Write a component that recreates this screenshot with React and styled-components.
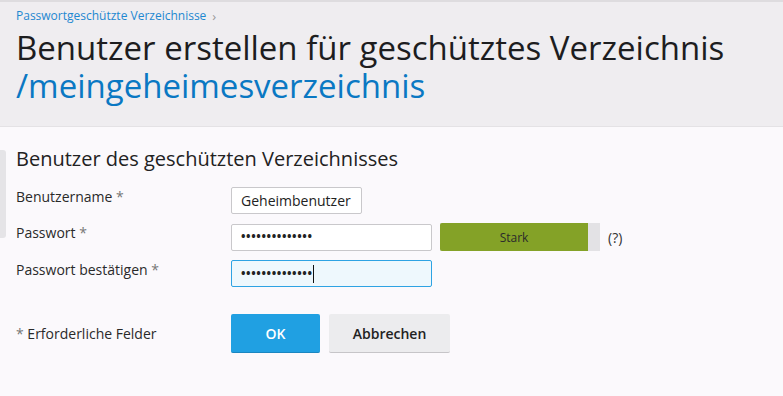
import React from 'react';
import styled, { createGlobalStyle } from 'styled-components';

const GlobalStyle = createGlobalStyle`
  html, body {
    margin: 0;
    padding: 0;
    background: #fbf9fc;
    font-family: 'Open Sans', 'DejaVu Sans', sans-serif;
    color: #222;
  }
`;

const Page = styled.div`
  width: 783px;
  height: 396px;
  overflow: hidden;
  background: #fbf9fc;
`;

const Header = styled.header`
  background: #efedf0;
  border-top: 2px solid #dedcdf;
  border-bottom: 1px solid #e4e2e5;
  height: 127px;
  box-sizing: border-box;
  padding: 6px 16px 0;
`;

const Breadcrumb = styled.div`
  display: flex;
  align-items: center;
  gap: 6px;
  font-size: 12px;
  line-height: 16px;
  color: #1e88d0;

  span.sep {
    color: #999;
    font-size: 13px;
  }
`;

const Title = styled.h1`
  margin: 5px 0 0;
  font-size: 33px;
  font-weight: 400;
  line-height: 38px;
  color: #1d1d1f;
`;

const Path = styled.span`
  display: block;
  color: #0a78c3;
`;

const Body = styled.main`
  display: flex;
  padding-top: 19px;
`;

const SideTab = styled.div`
  width: 6px;
  height: 88px;
  margin-top: 4px;
  background: #e5e4e7;
  border-radius: 0 3px 3px 0;
  flex: none;
`;

const Content = styled.div`
  padding-left: 10px;
  flex: 1;
`;

const SectionTitle = styled.h2`
  margin: 0 0 15px;
  font-size: 20px;
  font-weight: 400;
  line-height: 26px;
  color: #222;
`;

const Form = styled.div`
  display: grid;
  grid-template-columns: 215px auto;
  row-gap: 9px;
  align-items: start;
`;

const Label = styled.label`
  font-size: 14px;
  line-height: 20px;
  color: #2a2a2a;

  span {
    color: #777;
  }
`;

const Field = styled.div`
  display: flex;
  align-items: center;
  gap: 8px;
`;

const Input = styled.div`
  box-sizing: border-box;
  width: ${({ $w }) => $w}px;
  height: 27px;
  border: 1px solid ${({ $focus }) => ($focus ? '#2ea3e3' : '#c9c8cb')};
  border-radius: 2px;
  background: ${({ $focus }) => ($focus ? '#eef8fd' : '#fff')};
  padding: 0 9px;
  display: flex;
  align-items: center;
  font-size: 14px;
  color: #222;
`;

const Dots = styled.span`
  letter-spacing: 0.6px;
  font-size: 12px;
  font-weight: 700;
  line-height: 1;
`;

const Caret = styled.span`
  display: inline-block;
  width: 1px;
  height: 18px;
  background: #111;
  margin-left: 0;
`;

const Strength = styled.div`
  display: flex;
  width: 160px;
  height: 28px;
  background: #e3e2e5;
`;

const StrengthFill = styled.div`
  width: 148px;
  background: #84a227;
  border-radius: 2px 0 0 2px;
  display: flex;
  align-items: center;
  justify-content: center;
  font-size: 12px;
  color: #2b2b2b;
`;

const Help = styled.span`
  font-size: 14px;
  color: #333;
`;

const Footer = styled.div`
  display: grid;
  grid-template-columns: 215px auto;
  align-items: center;
  margin-top: 27px;
`;

const Note = styled.div`
  font-size: 14px;
  color: #2a2a2a;

  span {
    color: #777;
  }
`;

const Buttons = styled.div`
  display: flex;
  gap: 9px;
`;

const Button = styled.button`
  box-sizing: border-box;
  height: 39px;
  width: ${({ $w }) => $w}px;
  border: none;
  border-radius: 2px;
  font-family: inherit;
  font-size: 14px;
  font-weight: 600;
  background: ${({ $primary }) => ($primary ? '#20a0e2' : '#ececee')};
  color: ${({ $primary }) => ($primary ? '#fff' : '#222')};
  border-bottom: 1px solid ${({ $primary }) => ($primary ? '#1a86c0' : '#c6c5c8')};
`;

export default function App() {
  return (
    <Page>
      <GlobalStyle />
      <Header>
        <Breadcrumb>
          Passwortgeschützte Verzeichnisse <span className="sep">›</span>
        </Breadcrumb>
        <Title>
          Benutzer erstellen für geschütztes Verzeichnis
          <Path>/meingeheimesverzeichnis</Path>
        </Title>
      </Header>
      <Body>
        <SideTab />
        <Content>
          <SectionTitle>Benutzer des geschützten Verzeichnisses</SectionTitle>
          <Form>
            <Label>
              Benutzername <span>*</span>
            </Label>
            <Field>
              <Input $w={131}>Geheimbenutzer</Input>
            </Field>
            <Label>
              Passwort <span>*</span>
            </Label>
            <Field>
              <Input $w={201}>
                <Dots>••••••••••••••</Dots>
              </Input>
              <Strength>
                <StrengthFill>Stark</StrengthFill>
              </Strength>
              <Help>(?)</Help>
            </Field>
            <Label>
              Passwort bestätigen <span>*</span>
            </Label>
            <Field>
              <Input $w={201} $focus>
                <Dots>••••••••••••••</Dots>
                <Caret />
              </Input>
            </Field>
          </Form>
          <Footer>
            <Note>
              <span>*</span> Erforderliche Felder
            </Note>
            <Buttons>
              <Button $primary $w={89}>OK</Button>
              <Button $w={121}>Abbrechen</Button>
            </Buttons>
          </Footer>
        </Content>
      </Body>
    </Page>
  );
}
